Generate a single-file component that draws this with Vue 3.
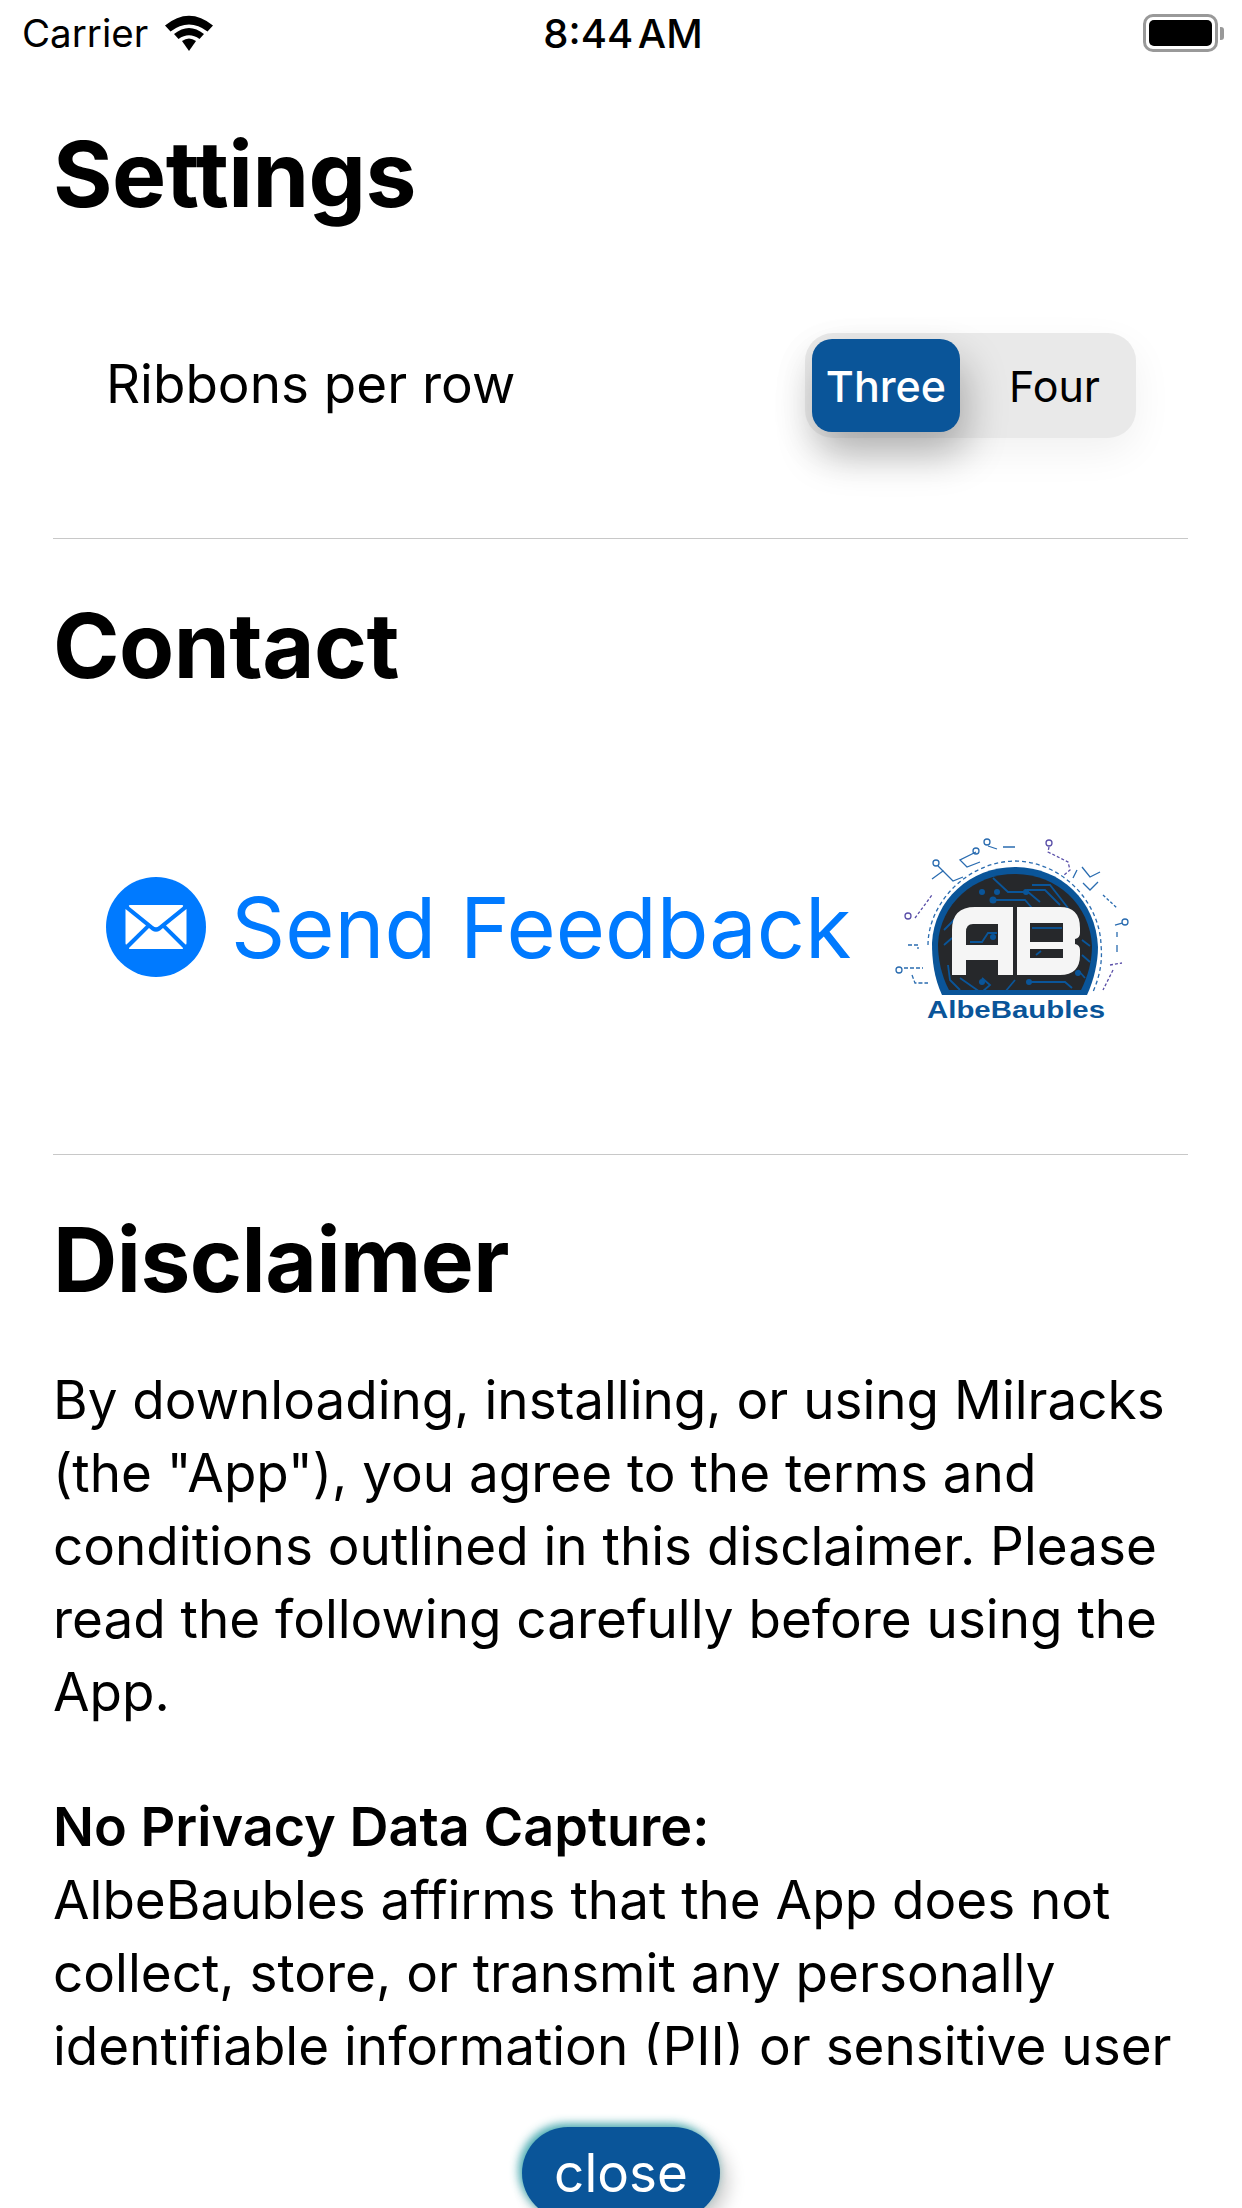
<template>
  <div class="screen">
    <header class="status-bar">
      <div class="status-left">
        <span class="carrier">Carrier</span>
        <svg class="wifi" viewBox="0 0 50 38" width="50" height="38">
          <path d="M25 37 L18 27 Q25 22 32 27 Z" fill="#000" />
          <path d="M10 20 Q25 8 40 20 L35.500 25 Q25 17.500 14.500 25 Z" fill="#000" />
          <path d="M1 11.500 Q25 -8 49 11.500 L43.500 17.500 Q25 3.500 6.500 17.500 Z" fill="#000" />
        </svg>
      </div>
      <div class="clock">8:44 AM</div>
      <div class="status-right">
        <div class="battery"><div class="battery-fill"></div></div>
        <div class="battery-cap"></div>
      </div>
    </header>

    <main class="content">
      <section class="block settings">
        <h1>Settings</h1>
        <div class="ribbons-row">
          <span class="ribbons-label">Ribbons per row</span>
          <div class="picker">
            <button
              v-for="option in options"
              :key="option"
              class="picker-btn"
              :class="{ active: option === selected }"
            >
              {{ option }}
            </button>
          </div>
        </div>
      </section>

      <section class="block contact">
        <h1>Contact</h1>
        <div class="contact-row">
          <div class="feedback">
            <svg class="mail" viewBox="0 0 100 100" width="100" height="100">
              <circle cx="50" cy="50" r="50" fill="#007aff" />
              <path d="M24 28 H76 Q78 28 76.500 30 L53 49 Q50 51.500 47 49 L23.500 30 Q22 28 24 28 Z" fill="#fff" />
              <path d="M19.500 32 L40 48.500 L20.500 67.500 Q19.500 68 19.500 66 Z" fill="#fff" />
              <path d="M80.500 32 L60 48.500 L79.500 67.500 Q80.500 68 80.500 66 Z" fill="#fff" />
              <path d="M43 51 L46 53.500 Q50 56 54 53.500 L57 51 L77 71 Q77.500 72 76 72 H24 Q22.500 72 23 71 Z" fill="#fff" />
            </svg>
            <span class="feedback-text">Send Feedback</span>
          </div>
          <svg class="logo" viewBox="0 0 300 220" width="300" height="220">
            <g fill="none" stroke="#2a6cb0" stroke-width="1.300">
              <path d="M68 125 C68 85 105 42 155 41 C205 42 240 85 241 125 C243 145 238 160 233 172" stroke-dasharray="4 3" />
              <path d="M78 46 L83 51 L72 59" />
              <path d="M83 51 L93 61 L103 57" />
              <path d="M116 32 L100 40 L107 47 L120 42" />
              <path d="M128 26 L137 29 M143 27 H155" />
              <path d="M217 50 L213 58 M222 47 L230 57 L240 52 M223 63 L230 70 L238 62" />
              <path d="M243 75 L257 88" stroke-dasharray="3 2" />
              <path d="M255 105 L262 103 M257 112 V117 M257 125 V132" />
              <path d="M48 125 H58 V129 M44 148 H63 M52 155 L55 163 L68 163" stroke-dasharray="4 2" />
              <circle cx="39" cy="150" r="3" />
              <circle cx="76" cy="43" r="3" />
              <circle cx="116" cy="31" r="3" />
              <circle cx="127" cy="22" r="3" />
              <circle cx="265" cy="102" r="3" />
            </g>
            <g fill="none" stroke="#5a4fa8" stroke-width="1.300">
              <path d="M189 27 L188 32 L208 42 L210 50 L204 55" stroke-dasharray="3 2" />
              <path d="M55 98 L72 75" stroke-dasharray="3 2" />
              <path d="M250 145 L262 143 M253 150 L243 170" stroke-dasharray="3 2" />
              <circle cx="48" cy="96" r="3" />
              <circle cx="189" cy="23" r="3" />
            </g>
            <path d="M82 175 C74 158 72 140 72 123 C74 80 110 47 155 47 C200 47 236 80 238 127 C238 142 234 160 227 175 Z" fill="#0a5599" />
            <path d="M89 170 C81 155 78 138 78 124 C80 84 114 54 155 54 C196 54 230 84 232 126 C232 141 228 156 221 170 Z" fill="#26282b" />
            <g fill="none" stroke="#0a5599" stroke-width="1.800">
              <path d="M133 58 L148 72 H168 L180 82" />
              <path d="M133 80 H165 L172 88" />
              <path d="M167 70 H185 L200 85" />
              <path d="M172 65 H190 L208 88" />
              <path d="M168 162 H205 L212 168" />
              <path d="M122 158 L130 165 L122 172" />
              <path d="M100 158 L120 172" />
              <path d="M88 145 L90 160 L100 170" />
              <path d="M222 120 L230 126 M222 135 L230 142 M218 150 L225 158" />
              <path d="M84 110 L98 96 M84 125 L92 118" />
              <path d="M155 160 L145 172" />
            </g>
            <g fill="#0a5599">
              <circle cx="122" cy="72" r="3" />
              <circle cx="137" cy="72" r="3" />
              <circle cx="166" cy="72" r="3" />
              <circle cx="133" cy="80" r="3.500" />
              <circle cx="122" cy="162" r="3" />
              <circle cx="169" cy="162" r="3" />
              <circle cx="218" cy="153" r="3" />
            </g>
            <path
              d="M92 155 V110 Q92 87 115 87 H153 V155 H138 V140 H106 V155 Z M106 125 H138 V104 H113 Q106 104 106 112 Z"
              fill="#f5f5f5"
              fill-rule="evenodd"
            />
            <path
              d="M157 87 H200 Q220 87 220 108 V113 Q220 118 215 119 V124 Q220 125 220 130 V135 Q220 155 200 155 H157 Z M170 103 V122 H203 V103 Z M170 129 V138 H203 V129 Z"
              fill="#f5f5f5"
              fill-rule="evenodd"
            />
            <g fill="none" stroke="#0a5599" stroke-width="1.800">
              <path d="M110 122 L122 122 L128 113 H137" />
              <path d="M172 108 H202" />
              <path d="M176 135 L181 131" />
            </g>
            <circle cx="133" cy="117" r="3" fill="#0a5599" />
            <text x="67" y="198" class="logo-name" textLength="178" lengthAdjust="spacingAndGlyphs">AlbeBaubles</text>
          </svg>
        </div>
      </section>

      <section class="disclaimer">
        <h1>Disclaimer</h1>
        <p class="para">
          By downloading, installing, or using Milracks<br />
          (the "App"), you agree to the terms and<br />
          conditions outlined in this disclaimer. Please<br />
          read the following carefully before using the<br />
          App.
        </p>
        <p class="para">
          <strong>No Privacy Data Capture:</strong><br />
          AlbeBaubles affirms that the App does not<br />
          collect, store, or transmit any personally<br />
          identifiable information (PII) or sensitive user
        </p>
      </section>
    </main>

    <footer class="bottom">
      <button class="close-btn">close</button>
    </footer>
  </div>
</template>

<script setup>
import { ref } from 'vue'

const options = ['Three', 'Four']
const selected = ref('Three')
</script>

<style>
html,
body {
  margin: 0;
  background: #fff;
}
</style>

<style scoped>
.screen {
  width: 1242px;
  height: 2208px;
  display: flex;
  flex-direction: column;
  overflow: hidden;
  background: #fff;
  color: #000;
  font-family: Inter, "Liberation Sans", sans-serif;
}

.status-bar {
  height: 66px;
  flex: none;
  display: grid;
  grid-template-columns: 1fr auto 1fr;
  align-items: center;
  padding: 0 18px 0 22px;
}

.status-left {
  display: flex;
  align-items: center;
  gap: 16px;
}

.carrier {
  font-size: 38.5px;
}

.clock {
  font-size: 40px;
  font-weight: 500;
  word-spacing: -6px;
}

.status-right {
  display: flex;
  align-items: center;
  justify-content: flex-end;
  gap: 2px;
}

.battery {
  width: 75px;
  height: 38px;
  box-sizing: border-box;
  border: 3px solid #999;
  border-radius: 10px;
  padding: 3px;
}

.battery-fill {
  width: 100%;
  height: 100%;
  background: #000;
  border-radius: 5px;
}

.battery-cap {
  width: 4px;
  height: 13px;
  background: #999;
  border-radius: 0 3px 3px 0;
}

.content {
  flex: none;
  height: 1999px;
  box-sizing: border-box;
  padding: 0 54px 0 53px;
  overflow: hidden;
}

.block {
  border-bottom: 1px solid #c8c8c8;
}

h1 {
  margin: 0;
  font-size: 90px;
  line-height: 106px;
  font-weight: 700;
  letter-spacing: -0.5px;
}

.settings h1 {
  font-size: 91px;
}

.settings {
  padding-top: 55px;
  height: 473px;
  box-sizing: border-box;
}

.ribbons-row {
  display: flex;
  align-items: center;
  justify-content: space-between;
  margin-top: 106px;
  padding: 0 52px 0 53px;
}

.ribbons-label {
  font-size: 53px;
  padding-bottom: 3px;
}

.picker {
  display: flex;
  padding: 6px 7px;
  border-radius: 28px;
  background: #e9e9e9;
  box-shadow: 0 14px 40px rgba(0, 0, 0, 0.06);
}

.picker-btn {
  width: 169px;
  height: 93px;
  box-sizing: border-box;
  padding: 0 0 0 20px;
  border: none;
  border-radius: 20px;
  background: transparent;
  color: #000;
  font-family: inherit;
  font-size: 43px;
}

.picker-btn.active {
  width: 148px;
  padding: 0;
  background: #0a5599;
  color: #fff;
  font-weight: 500;
  box-shadow: 6px 22px 40px rgba(0, 0, 0, 0.28);
}

.contact {
  height: 616px;
  box-sizing: border-box;
  padding-top: 54px;
}

.contact-row {
  display: flex;
  align-items: center;
  justify-content: space-between;
  margin-top: 121px;
  padding: 0 28px 0 53px;
}

.feedback {
  display: flex;
  align-items: center;
  gap: 25px;
  padding-bottom: 6px;
  color: #007aff;
}

.feedback-text {
  font-size: 84.5px;
}

.logo-name {
  font-family: "Liberation Sans", sans-serif;
  font-size: 23px;
  font-weight: 700;
  fill: #0a5599;
}

.disclaimer {
  padding-top: 52px;
}

.disclaimer h1 {
  margin-bottom: 51px;
  font-size: 89px;
}

.para {
  margin: 0 0 61px;
  font-size: 53px;
  line-height: 73px;
  white-space: nowrap;
}

.para strong {
  font-size: 54px;
  font-weight: 600;
}

.bottom {
  flex: 1;
  display: flex;
  justify-content: center;
  padding-top: 62px;
}

.close-btn {
  width: 198px;
  height: 92px;
  flex: none;
  border: none;
  border-radius: 46px;
  background: #0a5599;
  color: #fff;
  font-family: inherit;
  font-size: 53px;
  padding: 0;
  box-shadow: -3px -3px 10px rgba(30, 150, 160, 0.85), 8px 8px 18px rgba(0, 0, 0, 0.2);
}
</style>
